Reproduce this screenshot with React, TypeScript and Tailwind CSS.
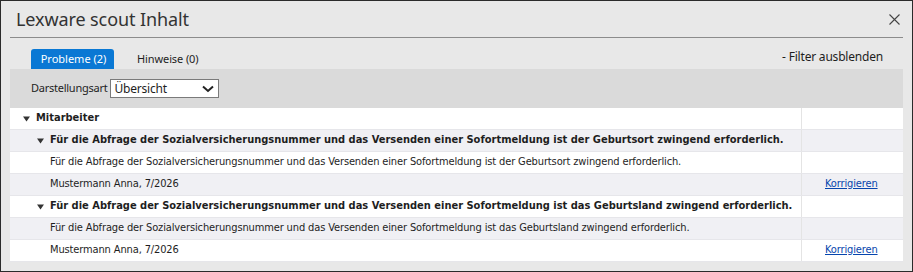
import React from 'react';

function Caret({ className = '' }: { className?: string }) {
    return (
        <svg width="7" height="6" viewBox="0 0 7 6" className={className}>
            <polygon points="0,0.5 7,0.5 3.5,5.5" fill="#333" />
        </svg>
    );
}

type Item = { title: string; text: string; person: string };

const items: Item[] = [
    {
        title: 'Für die Abfrage der Sozialversicherungsnummer und das Versenden einer Sofortmeldung ist der Geburtsort zwingend erforderlich.',
        text: 'Für die Abfrage der Sozialversicherungsnummer und das Versenden einer Sofortmeldung ist der Geburtsort zwingend erforderlich.',
        person: 'Mustermann Anna, 7/2026',
    },
    {
        title: 'Für die Abfrage der Sozialversicherungsnummer und das Versenden einer Sofortmeldung ist das Geburtsland zwingend erforderlich.',
        text: 'Für die Abfrage der Sozialversicherungsnummer und das Versenden einer Sofortmeldung ist das Geburtsland zwingend erforderlich.',
        person: 'Mustermann Anna, 7/2026',
    },
];

function Row({ shaded, children, aside }: { shaded: boolean; children: React.ReactNode; aside?: React.ReactNode }) {
    return (
        <div className={`flex h-[22px] border-b border-[#e6e6ea] ${shaded ? 'bg-[#f0f0f4]' : 'bg-white'}`}>
            <div className="flex-1 flex items-center border-r border-[#e4e4e4] whitespace-nowrap">{children}</div>
            <div className="w-[101px] flex items-center pl-[23px]">{aside}</div>
        </div>
    );
}

export default function App() {
    // alternate shading continues across the groups
    let n = 0;
    return (
        <div className="w-[913px] h-[272px] border border-[#2b2b2b] bg-[#e8e8e8] flex flex-col text-[#1e1e1e] font-[Noto_Sans,sans-serif]">
            {/* header */}
            <div className="flex items-center justify-between h-[36px] pl-[15px] pr-[12px]">
                <span className="text-[18px] tracking-[-0.1px] text-[#333] leading-none">Lexware scout Inhalt</span>
                <svg width="11" height="11" viewBox="0 0 11 11">
                    <path d="M0.5 0.5 L10.5 10.5 M10.5 0.5 L0.5 10.5" stroke="#444" strokeWidth="1.1" />
                </svg>
            </div>
            <div className="mx-[9px] border-b border-[#8c8c8c]" />

            {/* tabs */}
            <div className="flex items-end justify-between mx-[9px] mt-[11px] h-[20px]">
                <div className="flex items-end pl-[21px] text-[11px]">
                    <div className="w-[83px] h-[20px] bg-[#0a78d4] text-white rounded-t-[3px] flex items-center justify-center pl-[2px]">
                        Probleme (2)
                    </div>
                    <div className="ml-[23px] h-[20px] flex items-center tracking-[-0.1px]">Hinweise (0)</div>
                </div>
                <div className="pr-[20px] h-[20px] flex items-center mb-[2px] text-[12px] tracking-[-0.2px]">- Filter ausblenden</div>
            </div>

            {/* filter panel */}
            <div className="mx-[9px] h-[39px] bg-[#dadada] flex items-center pl-[21px] text-[11px]">
                <span className="tracking-[-0.25px]">Darstellungsart</span>
                <div className="ml-[3px] w-[109px] h-[19px] bg-white border border-[#7a7a7a] flex items-center justify-between pl-[3px] pr-[4px] text-[12px] tracking-[-0.2px]">
                    <span>Übersicht</span>
                    <svg width="12" height="8" viewBox="0 0 12 8">
                        <path d="M1 1.5 L6 6 L11 1.5" stroke="#222" strokeWidth="2" fill="none" />
                    </svg>
                </div>
            </div>

            {/* table */}
            <div className="mx-[9px] text-[11px] font-[DejaVu_Sans_Condensed,sans-serif]">
                <Row shaded={false}>
                    <Caret className="ml-[13px] mr-[6px]" />
                    <span className="font-bold">Mitarbeiter</span>
                </Row>
                {items.map((it, i) => {
                    const a = n++ % 2 === 0;
                    const b = n++ % 2 === 0;
                    const c = n++ % 2 === 0;
                    return (
                        <React.Fragment key={i}>
                            <Row shaded={a}>
                                <Caret className="ml-[27px] mr-[6px]" />
                                <span className="font-bold">{it.title}</span>
                            </Row>
                            <Row shaded={b}>
                                <span className="ml-[40px] tracking-[-0.13px]">{it.text}</span>
                            </Row>
                            <Row
                                shaded={c}
                                aside={<a className="text-[#0645ad] underline cursor-pointer tracking-[-0.13px]">Korrigieren</a>}
                            >
                                <span className="ml-[40px] tracking-[-0.13px]">{it.person}</span>
                            </Row>
                        </React.Fragment>
                    );
                })}
            </div>
        </div>
    );
}
